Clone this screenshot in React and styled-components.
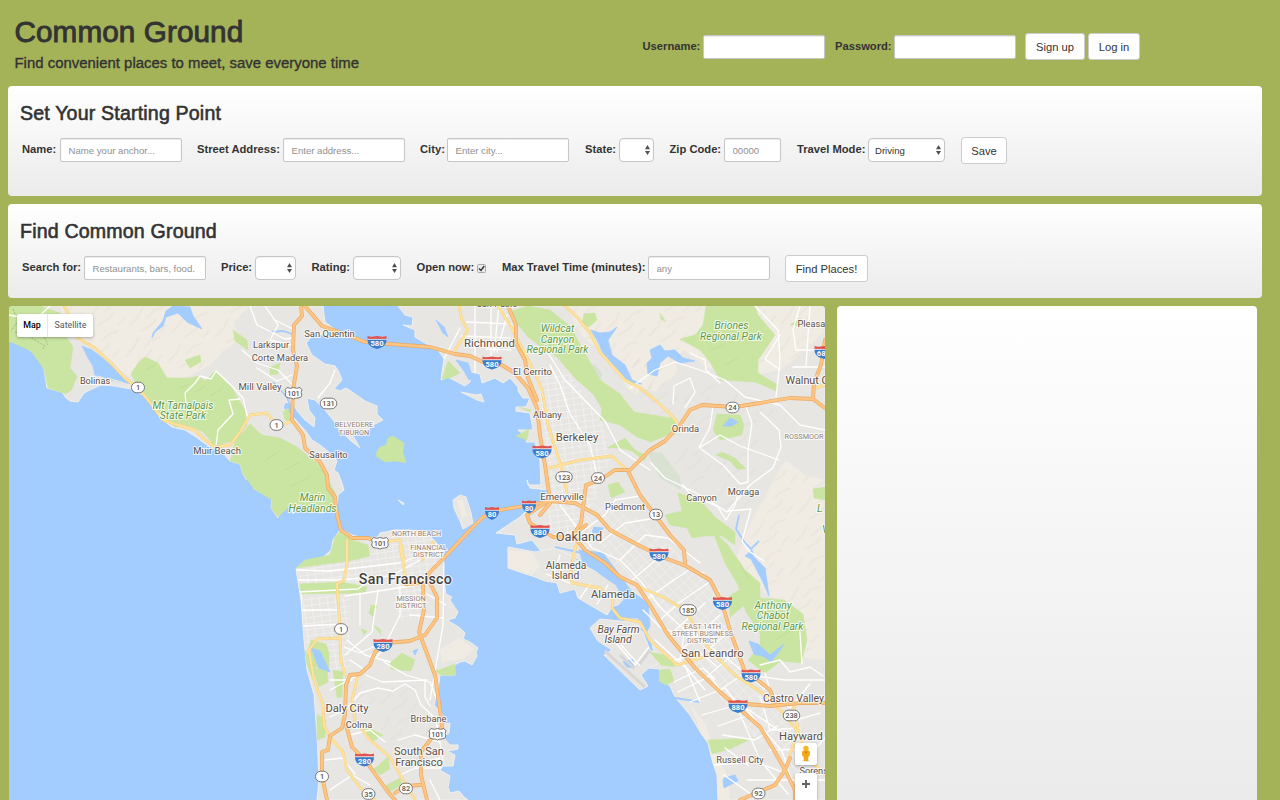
import React from 'react';
import styled, { createGlobalStyle } from 'styled-components';

const Global = createGlobalStyle`
  * { box-sizing: border-box; }
  body {
    margin: 0;
    background: #a4b258;
    color: #333;
    font-family: "Liberation Sans", Arial, sans-serif;
    font-size: 11.2px;
    overflow: hidden;
  }
`;

const Page = styled.div`
  width: 1280px;
  height: 800px;
  overflow: hidden;
  display: flex;
  flex-direction: column;
  padding-left: 8px;
`;

const Header = styled.header`
  height: 86px;
  display: flex;
  padding-left: 6.5px;
`;

const Brand = styled.div`
  width: 628px;
  padding-top: 13px;
`;

const Title = styled.h1`
  margin: 0;
  font-size: 29.7px;
  line-height: 38px;
  font-weight: 400;
  letter-spacing: 0.08px;
  -webkit-text-stroke: 0.9px #333;
`;

const Tagline = styled.p`
  margin: 3px 0 0;
  font-size: 14.9px;
  line-height: 18px;
  letter-spacing: 0.02px;
  -webkit-text-stroke: 0.35px #333;
`;

const Login = styled.form`
  display: flex;
  align-items: flex-start;
  padding-top: 33px;
`;

const Panel = styled.section`
  flex: none;
  width: 1254px;
  height: ${(p) => p.$height}px;
  margin-bottom: 8px;
  padding: 14px 0 0 12px;
  border-radius: 4px;
  background: linear-gradient(#fff, #ebebeb);
`;

const PanelTitle = styled.h2`
  margin: 0;
  font-size: 19.6px;
  line-height: 26px;
  font-weight: 400;
  letter-spacing: 0.17px;
  -webkit-text-stroke: 0.6px #333;
`;

const Row = styled.form`
  display: flex;
  align-items: flex-start;
  padding: 11px 0 0 2px;
`;

const Field = styled.label`
  display: flex;
  align-items: flex-start;
  padding-top: ${(p) => p.$top ?? 1}px;
  margin-right: ${(p) => p.$gap ?? 15}px;
`;

const Caption = styled.span`
  width: ${(p) => p.$w}px;
  line-height: 22px;
  font-weight: 700;
  white-space: nowrap;
`;

const Input = styled.input`
  width: ${(p) => p.$w || 122}px;
  height: 24px;
  margin: 0;
  padding: 1px 8px 0 7.5px;
  border: 1px solid #c6c6c6;
  border-radius: 2px;
  background: #fff;
  box-shadow: inset 0 1px 1px rgba(0, 0, 0, 0.08);
  font: 9.6px "Liberation Sans", Arial, sans-serif;
  color: #555;
  &::placeholder { color: #909090; opacity: 1; }
`;

const Select = styled.span`
  display: flex;
  align-items: center;
  justify-content: space-between;
  width: ${(p) => p.$w}px;
  height: 24px;
  padding: 0 3px 0 6px;
  border: 1px solid #c6c6c6;
  border-radius: 4px;
  background: #fff;
  box-shadow: inset 0 1px 1px rgba(0, 0, 0, 0.05);
  font-size: 9.6px;
  color: #333;
`;

const Arrows = styled.svg`
  width: 5px;
  height: 10px;
  margin-left: auto;
`;

const Check = styled.svg`
  width: 9px;
  height: 9px;
  margin-top: 8px;
`;

const Button = styled.button`
  width: ${(p) => p.$w}px;
  height: 27px;
  margin: 0 ${(p) => p.$gap || 0}px 0 0;
  padding: 1px 0 0;
  border: 1px solid #ccc;
  border-radius: 3px;
  background: #fff;
  color: #333;
  font: 11.2px "Liberation Sans", Arial, sans-serif;
  white-space: nowrap;
`;

const Body = styled.main`
  display: flex;
  gap: 12px;
  padding-left: 1px;
  height: 494px;
`;

const MapFrame = styled.section`
  position: relative;
  width: 816px;
  height: 494px;
  overflow: hidden;
  border-radius: 4px 4px 0 0;
  background: #a3ccff;
`;

const MapCanvas = styled.svg`
  display: block;
  width: 816px;
  height: 494px;
  font-family: Roboto, sans-serif;
`;

const Results = styled.aside`
  width: 420px;
  height: 494px;
  border-radius: 4px 4px 0 0;
  background: linear-gradient(#fff, #ebebeb 480px);
`;

const MapTypes = styled.div`
  position: absolute;
  left: 8px;
  top: 8px;
  display: flex;
  height: 23px;
  border-radius: 2px;
  background: #fff;
  box-shadow: 0 1px 3px rgba(0, 0, 0, 0.3);
`;

const MapType = styled.span`
  width: ${(p) => p.$w}px;
  line-height: 22px;
  text-align: center;
  font-family: Roboto, sans-serif;
  font-size: 8.9px;
  font-weight: ${(p) => (p.$active ? 500 : 400)};
  color: ${(p) => (p.$active ? '#000' : '#565656')};
  border-left: ${(p) => (p.$active ? 0 : 1)}px solid #e6e6e6;
`;

const MapTools = styled.div`
  position: absolute;
  left: 786px;
  top: 437px;
  display: flex;
  flex-direction: column;
  gap: 8px;
`;

const Tool = styled.div`
  width: 22px;
  height: ${(p) => p.$h}px;
  border-radius: 2px;
  background: #fff;
  box-shadow: 0 1px 3px rgba(0, 0, 0, 0.3);
  svg { display: block; }
`;

const LAND = [
  // Marin
  'M9 306V341L22 345L31 351L38 357L44 369L47 388L62 392L66 398L70 401L78 402L84 393L92 389L101 385L115 386L131 389L143 395L155 408L163 420L172 427L185 430L196 437L207 445L222 452L230 461L240 464L243 474L246 479L251 481L254 489L267 495L272 500L271 508L278 518L280 508L290 506L293 514L300 504L310 507L322 513L330 510L337 513L338 495L344 490L341 480L338 473L334 470L337 461L330 453L320 445L312 440L305 430L300 425L296 420L283 408L285 402L293 404L298 412L305 420L314 427L315 418L309 410L307 398L315 400L325 410L333 420L340 430L350 440L360 448L352 434L358 430L365 432L375 424L383 420L377 414V406L365 401L355 394L346 388L340 391L334 389L342 380L339 372L335 366L325 364L312 355L306 343L312 336L323 334L345 337L325 322L323 306Z',
  // San Francisco peninsula
  'M296 569L305 561L320 560L331 550L333 540L340 530L345 531L352 535L364 538L378 537L380 533L395 530L410 530L425 532L435 541L443 552L444 563L444 582L446 594L452 597L450 600L458 612L455 618L447 620L460 628L465 633L463 639L470 642L478 648L476 652L477 656L472 665L465 661L460 662L453 666L455 675L440 675L438 690L434 705L443 715L440 725L450 723L449 733L443 737L450 745L458 745V749L447 751L455 755L453 766L443 766L440 770L450 776L448 787L450 793L459 791L464 797L468 800H317L319 780L317 735L314 695L307 670L304 640L301 600Z',
  // East Bay shore
  'M398 306L405 315L413 317L412 326L403 325L415 330L415 337L430 346L438 350L444 359L441 380L448 377L465 386L470 382L471 372L480 374L482 383L495 378L503 383L510 378L518 387L518 391L523 398L530 398L526 407L516 407V411L530 413L533 430L518 430L528 438L526 442H535L540 460L541 485H528L527 480L530 488L548 490L546 501L530 507L520 517L496 533L515 535L517 544L532 540L540 550L562 551L570 555L580 560L595 562L610 573L622 584L630 592L640 604L624 608L620 618L630 622L645 630L652 644L655 657L645 660L640 667L660 669V679L670 686L675 697L690 715L702 735L708 743L712 760L717 775L718 800H825V306Z',
  // Alameda island and Bay Farm island
  'M508 547L535 552L556 548L570 556L589 568L608 578L626 594L625 602L612 607L607 615L590 605L578 598L575 589L560 593L557 583L545 581L535 577L508 568Z',
  'M590 628L600 619L630 622L643 632L650 650L668 660L650 667L641 675L648 686L640 690L604 655L612 650L598 641Z',
  // Treasure Island
  'M453 500L460 495L466 497L471 513L473 523L463 529L460 521L454 508Z',
  'M398 500L404 503L403 505Z',
  'M461 392L476 395L481 394L484 402L477 400Z',
];

const HILLS = [
  'M60 306H250L234 322L238 340L225 350L210 365L185 378H168L148 357L130 377L88 345L68 335Z',
  'M565 306H825V330L805 350L780 370L740 378L707 368L685 350L660 365L635 395L625 385L610 355L585 340Z',
  'M785 460L805 475L825 480V660L805 658L795 610L760 590L735 560L752 520L768 490Z',
  'M630 350L650 335L670 345L678 372L655 392L636 386Z',
  'M690 704L706 725L714 752L730 780L729 800H718L710 760L702 735Z',
  'M508 550L532 552L540 566L532 575L508 567Z',
  'M457 500L463 500L467 515L462 519Z',
  'M440 650L459 638L474 649L464 659L442 662Z',
];

const PARKS = [
  'M9 306H40L60 313L65 322V335L73 347L70 368L77 376L72 389L66 394L48 388L44 369L31 351L9 341Z',
  'M131 374L138 363L145 357L158 363L167 378L190 378L198 376L205 381L215 371L232 388L245 410L247 425L235 440L215 446L203 432L190 426L175 427L162 417L152 403L140 390Z',
  'M233 450L236 438L245 430L250 424L262 435L280 438L297 447L317 463L327 477L336 495L337 513L330 510L322 513L310 507L300 504L290 506L278 517L271 508L272 500L254 489L243 474L240 464L230 461Z',
  'M185 360L200 355L201 362L190 368Z',
  'M233 330L247 340L248 350L235 341Z',
  'M270 367L280 363L278 374L270 375Z',
  'M376 453L380 447L386 445L388 438L393 436L404 443L403 452L406 463L395 461L385 462L377 457Z',
  'M283 412L288 408L291 421L285 420Z',
  'M508 312L528 306L550 310L570 326L590 362L600 380L620 394L634 412L677 419L670 434L651 442L637 437L620 425L600 420L602 409L594 395L575 378L557 357L540 346L528 337Z',
  'M584 314L595 313L597 320L589 327L582 323Z',
  'M660 313L666 322L661 319Z',
  'M706 306H755L758 315L775 335L765 350L758 360V373L778 385L776 391L755 382L720 380L710 362L700 350L680 339L695 335L703 325Z',
  'M717 414L740 415L744 425L742 435L720 440L713 430Z',
  'M716 455L722 452L735 458L746 469L737 469L730 461Z',
  'M607 448L625 438L635 450L647 456L644 461L632 451L620 448Z',
  'M608 485L618 482L625 492L611 498Z',
  'M665 515L682 511L678 493L700 500L715 517L735 532L735 545L722 536H704L692 538L687 528L670 525Z',
  'M712 530L728 545L745 570L760 583V598L784 600L803 614L807 640L801 663L781 661L765 673L748 660L760 646V633L746 612L738 585L725 563Z',
  'M728 597L742 588L746 604L730 617Z',
  'M660 670L670 669L674 681L666 685L659 681Z',
  'M650 652L669 656L675 667L661 665Z',
  'M708 740L730 739L753 738L730 749L712 754Z',
  'M442 379L448 361L460 373L450 378Z',
  'M516 436L529 429L527 440Z',
  'M519 407L531 410L530 412Z',
  'M813 489L825 487V500L814 498Z',
  'M790 325L800 318L805 326Z',
  // San Francisco parks
  'M296 568L305 560L330 555L335 537L342 530L352 540L368 545L370 556L350 561L326 564Z',
  'M300 584L342 582L367 587L365 593L301 594Z',
  'M311 640L326 644L329 653V670L315 667L308 650Z',
  'M313 669L327 668L328 682L319 687Z',
  'M305 650L315 665L313 680L307 665Z',
  'M333 670L343 672L342 697L337 698Z',
  'M390 663L402 653L415 660L411 671L391 669Z',
  'M317 714L326 720L325 737L317 740Z',
  'M371 605L377 606L373 617L369 613Z',
  'M373 625L380 629L381 635Z',
  'M361 629L367 631L364 635Z',
  'M353 720L383 735L372 742L357 725Z',
  'M374 769L388 757L390 769L380 775Z',
  'M383 787L400 778L402 785L387 793Z',
  'M436 671L455 664L456 675H440Z',
];

const WATER = [
  'M82 346L92 350L100 356L112 366L125 377L133 384L113 381L101 376L95 375L93 366L88 358Z',
  'M166 311L173 306L190 307L193 316L202 329L187 322L178 313L166 317L163 326L155 332L152 338L153 333L163 321Z',
  'M591 330L600 333L610 332L617 327L608 340L612 355L625 365L632 380L642 384L630 383L615 367L603 353L598 342Z',
  'M650 350L660 345L665 351L675 350L683 358L695 361L680 363L668 356L660 363L657 376L648 374L647 363L652 358Z',
  'M723 426L730 418L738 422L732 426Z',
  'M752 550L745 556L751 559L762 580L769 596L765 568L754 557Z',
  'M749 641L758 644L770 655L784 644L778 653L771 662L765 657L754 654Z',
  'M311 648L320 651L330 672L319 668Z',
  'M623 662L633 659L634 668L627 667Z',
  'M579 550L603 553L616 570L632 592L648 603L650 626L646 633L638 618L622 618L613 611L624 600L616 585L600 574L582 560Z',
  'M594 527L603 528L599 534L592 532Z',
  'M444 327L448 337L443 333L436 320Z',
  'M456 360L468 363L473 378L469 380L464 371Z',
  'M724 778L735 775L738 781L724 788L723 781Z',
  'M413 651L418 649L415 655Z',
];

const STREETS = [
  // Marin
  'M186 403L185 393L195 383L200 376L211 379L216 371L232 386L243 398L248 419',
  'M216 446L218 430L233 414L229 400L240 399',
  'M250 306L257 325L285 339L292 338M242 350L257 363L278 370L293 385M265 306L278 325L270 340L292 345M292 375L277 381L257 368M318 398L330 383L335 370M295 330L275 320',
  'M9 315L35 320L50 306',
  // Richmond
  'M475 306V382M491 306V360M499 306L494 352M466 322L512 324M461 336L510 338M486 349L511 350M460 328L444 359M507 315L497 352',
  'M550 365L560 385L570 414L590 445L598 480M545 348L565 380L605 421L620 450L650 470',
  'M630 388L655 370L675 362L700 370L725 380L745 397L780 405L800 425L825 430',
  'M755 306L778 330L780 360L776 397M800 306L793 330L796 350H825M793 367H825M810 306L806 366M780 335L765 359L780 370',
  'M673 404L674 386L690 378L695 392L685 408M713 407L710 427L699 448L720 435L740 446L779 460M746 407L752 423L748 450V482L740 484L723 465L701 449',
  'M651 463L665 478L680 485L700 495L727 512L750 485L773 468L781 447L779 430L760 412',
  'M683 485L690 494L718 507L726 520L735 505L739 490',
  'M728 511L751 509L742 541L750 552L764 561',
  'M690 353L705 360L706 370L720 383',
  // San Francisco
  'M297 570L328 571L400 563L428 552M298 580H337L391 576L440 549M298 592L358 589L366 583M301 594L303 650M301 610H340M302 626L344 624M345 596L425 584M360 593V625M378 590L372 632L345 655M400 585V615L387 641L370 656M420 590L446 605M444 565L443 625L430 700M344 647L360 653L380 644M330 680H352M330 690L360 674L383 650M350 660L365 670M384 662L406 675L430 682L437 700M425 680V697L430 706M330 717L345 710L360 693L378 688L393 691L405 684L415 690L421 705L435 718L440 737',
  'M347 640L365 655L390 662M410 615L443 618M366 675L382 682L427 680M350 735L370 730L385 742M398 740L415 735L440 742L443 760M420 763L440 758M325 760L342 758L355 774M330 790L352 775L370 785M400 775L415 768H443M430 780L440 800',
  // Oakland and San Leandro
  'M560 505L575 525L592 548L620 560L632 572L642 583L660 607L690 635L720 653L765 689',
  'M570 540L605 515L615 500L640 496M600 543L625 523L650 519M620 560L645 535L668 538L700 563',
  'M630 582L670 548M645 600L690 569L704 573M660 620L680 602L708 583M670 635L705 603M681 650L720 615M695 661L731 630M705 678L735 653M720 690L745 673',
  'M643 610L661 628L684 635L680 660L705 690M655 640L686 668L700 702M675 660L701 653L717 667M674 682L703 668L715 679M678 692L710 676L720 690M690 702L725 688L737 703M702 715L740 704L780 731M718 726L750 715L765 731M723 735L755 740L777 726M734 700L760 760L788 794M742 674L785 680H825M765 673L770 690M760 696L770 730L800 728M775 695L790 708L810 684M745 708L782 751L795 790M713 765L756 762L790 775M724 775L748 792L760 800M725 748L749 766M792 721L820 713M810 755L825 738M770 750L810 749M747 780H825',
  'M760 665L780 660L790 672L810 667L823 676M800 632L802 664',
  'M608 585L597 604M590 584L580 598M546 574L575 585M552 580L560 555M615 642L635 665L649 647M621 645L640 666',
];

const YELLOW = [
  'M64 306L72 320L76 337L95 348L108 360L125 378L140 390L152 405L163 420L175 424L195 430L205 440L215 447L230 445L240 432L250 415L267 413L276 425M284 424L292 421',
  'M459 306L462 320L468 330L455 350M498 306L510 325L523 350L536 375L542 390L548 425L560 463L567 492M550 468L580 460L612 456L625 468',
  'M565 306L578 318L590 333L600 352L625 380L640 388L655 400L668 412L677 422',
  'M347 540V564L344 580L337 584L339 615L341 660L345 675M341 638L317 639L309 650L314 680L323 705L324 725L330 737L343 752L347 770L362 790L375 800M358 675L352 700L355 720L370 740L390 757L403 780L415 800M400 546L407 585M380 542L400 540L404 560M422 560L433 542',
  'M576 545L571 567L572 583L600 588L613 600L612 608L620 618L640 622L650 640L677 665L710 655',
  'M637 586L665 598L685 610L700 635L710 650L735 675L765 695L785 715L800 735L805 755L825 775M793 702L798 730L790 755',
  'M813 389L825 385',
];

const ORANGE = [
  'M301 306L302 316L294 325L293 350L297 366L293 390L292 420L303 435L305 448L320 462L327 475L328 488L335 497L337 515L341 530L352 538L368 538L378 542',
  'M305 306L322 326L345 334L365 342L390 344L430 347L455 354L470 356L483 362L500 364L515 373L528 388L537 408L540 435L545 465L550 500',
  'M508 306L516 325L516 343L525 360L528 378L537 400',
  'M423 583L430 572L444 558L470 530L483 517L500 510L530 505L550 501L575 503L597 515L610 530L640 546L665 558L686 566L710 580L722 603L730 630L737 650L745 672L760 682L770 690L775 702',
  'M405 584L423 583L424 610L419 632L435 675L440 710L442 727L430 740L421 752V775L427 800',
  'M430 583L437 597V618L425 635L410 641L385 643L375 652L370 665L360 674L350 675L346 685L345 715L342 728L330 736L328 750L322 752V776L327 800',
  'M346 725L352 747L365 760L378 778L388 792L395 800M395 793L406 786L421 785',
  'M572 537L581 523L586 485L600 480L615 470L630 470L650 450L665 441L680 425L690 410L702 405L735 407L760 403L790 398L813 399L825 408M825 340L821 365L814 383L813 398',
  'M628 471L640 495L655 515L670 535L684 550L685 563',
  'M548 501L527 515L530 523L553 537L575 538L585 550L605 563L620 577L637 585L650 605L668 635L695 668L720 692L735 705L760 727L775 752L785 770L795 790V800',
  'M735 703L770 706L800 703H825M740 800L775 785L785 770L790 758',
  'M550 503L540 515M586 525L573 536',
];

const TOWNS = [
  ['San Quentin', 329.5, 337, 9.4], ['Larkspur', 271, 348, 9.3], ['Corte Madera', 280, 361, 9.3],
  ['Mill Valley', 260, 390, 9.6], ['Bolinas', 95, 384, 9.2], ['Muir Beach', 217, 454, 9.5],
  ['Sausalito', 328.5, 458, 9.3], ['Richmond', 489.5, 346.5, 11.3], ['El Cerrito', 532.5, 374.5, 9.6],
  ['Albany', 547.5, 417.5, 9.5], ['Berkeley', 577, 440.5, 11.3], ['Orinda', 685.5, 432, 9.4],
  ['Canyon', 701.5, 500.5, 9.2], ['Moraga', 743.5, 494.5, 9.2], ['Piedmont', 625, 509.5, 9.3],
  ['Emeryville', 562, 499.5, 9.6], ['Oakland', 579, 540.5, 12.8], ['Alameda', 613, 597.5, 11.2],
  ['San Leandro', 712.5, 656.5, 11.2], ['Castro Valley', 793.5, 702, 10.5], ['Hayward', 801, 740, 11.2],
  ['Russell City', 740, 762.5, 9.2], ['Daly City', 347, 712, 11.2], ['Colma', 359, 727.5, 9.2],
  ['Brisbane', 428.5, 721.5, 9.2], ['South San', 419, 755, 11], ['Francisco', 419, 766, 11],
  ['Alameda', 566, 569, 10.3], ['Island', 565.5, 579, 10.3],
];

const DISTRICTS = [
  ['BELVEDERE', 354, 427], ['TIBURON', 354, 434.5], ['NORTH BEACH', 416.5, 535.5],
  ['FINANCIAL', 428.5, 549.5], ['DISTRICT', 428.5, 557], ['MISSION', 411, 600.5], ['DISTRICT', 411, 608],
  ['EAST 14TH', 702.5, 628.5], ['STREET BUSINESS', 702.5, 636], ['DISTRICT', 702.5, 643],
  ['ROSSMOOR', 804, 438.5],
];

const PARK_NAMES = [
  ['Mt Tamalpais', 183, 408.5], ['State Park', 183, 419], ['Marin', 312.5, 501], ['Headlands', 312.5, 511.5],
  ['Wildcat', 557.5, 332], ['Canyon', 557.5, 342.5], ['Regional Park', 557.5, 353],
  ['Briones', 731.5, 329], ['Regional Park', 731, 339.5],
  ['Anthony', 773, 608.5], ['Chabot', 773, 619], ['Regional Park', 772.5, 629.5],
];

const INTERSTATES = [
  [377, 342.5, '580'], [492, 363, '580'], [542, 452, '580'], [492, 513.5, '80'], [529, 507, '80'],
  [540, 531.5, '880'], [659, 555, '580'], [722.5, 603.5, '580'], [751, 676, '580'], [738, 706.5, '880'],
  [383, 645.5, '280'], [364.5, 760, '280'], [824, 352.5, '680'],
];

const ROUTES = [
  [138, 387.5, '1'], [276.5, 425, '1'], [293.5, 393, '101'], [328.5, 403.5, '131'], [380, 543, '101'],
  [341, 629, '1'], [322, 776.5, '1'], [368.5, 794, '35'], [406, 788.5, '82'], [437.5, 734, '101'],
  [564, 477, '123'], [598, 478, '24'], [732.5, 407.5, '24'], [656, 514.5, '13'], [688, 610, '185'],
  [791.5, 715.5, '238'], [758.5, 793.5, '92'],
];

function Interstate({ x, y, n }) {
  const w = n.length > 2 ? 19 : 14;
  const h = w / 2;
  const edge = x > 820;
  return (
    <g transform={`translate(${x} ${y})`}>
      <path d={`M${-h} -6.5Q${-h + 3} -5 0 -6.5Q${h - 3} -5 ${h} -6.5L${h} -3.5H${-h}Z`} fill="#e0524d" />
      <path d={`M${-h} -3H${h}C${h} 2 ${h - 3} 5 0 6.5C${-h + 3} 5 ${-h} 2 ${-h} -3Z`} fill="#3b7ccb" />
      <path d={`M${-h} -3.2H${h}`} stroke="#fff" strokeWidth=".6" />
      <text x={edge ? -7.2 : 0} y="3.6" fontSize="7.6" fontWeight="700" fill="#fff" textAnchor={edge ? 'start' : 'middle'}>
        {edge ? n.slice(0, 2) : n}
      </text>
    </g>
  );
}

function Route({ x, y, n }) {
  const three = n.length === 3;
  const w = three ? 16.5 : 13;
  return (
    <g transform={`translate(${x} ${y})`}>
      {n === '101' ? (
        <path
          d="M-6.5 -5.5Q-3 -3.8 0 -5.5Q3 -3.8 6.5 -5.5L8.4 -3.2Q7 -0.5 8.3 2Q8 5 4.5 5Q2 4.8 0 6Q-2 4.8 -4.5 5Q-8 5 -8.3 2Q-7 -0.5 -8.4 -3.2Z"
          fill="#fff" stroke="#777" strokeWidth="1"
        />
      ) : (
        <rect x={-w / 2} y="-5.3" width={w} height="10.6" rx="5.3" fill="#fff" stroke="#777" strokeWidth="1" />
      )}
      <text y="2.7" fontSize="7.4" fontWeight="500" fill="#555" textAnchor="middle">{n}</text>
    </g>
  );
}

const Roads = ({ paths, color, width }) => (
  <g fill="none" stroke={color} strokeWidth={width} strokeLinejoin="round" strokeLinecap="round">
    {paths.map((d) => <path key={d} d={d} />)}
  </g>
);

const Shapes = ({ paths, ...rest }) => (
  <g {...rest}>{paths.map((d) => <path key={d} d={d} />)}</g>
);

function BayMap() {
  return (
    <MapCanvas viewBox="9 306 816 494">
      <defs>
        <pattern id="blocks" width="8" height="6" patternUnits="userSpaceOnUse" patternTransform="rotate(-8)">
          <path d="M0 0H8M0 0V6" stroke="#fff" strokeWidth=".9" fill="none" />
        </pattern>
        <pattern id="blocksDiag" width="10" height="7" patternUnits="userSpaceOnUse" patternTransform="rotate(48)">
          <path d="M0 0H10M0 0V7" stroke="#fff" strokeWidth=".8" fill="none" />
        </pattern>
        <pattern id="ridges" width="43" height="31" patternUnits="userSpaceOnUse" patternTransform="rotate(8)">
          <path d="M2 25L9 15L12 6M19 14L25 6L33 2M14 29L24 21L27 15M33 27L38 19" stroke="#d9d5cb" strokeWidth="2" strokeLinecap="round" fill="none" opacity=".28" />
        </pattern>
        <clipPath id="ground">{LAND.map((d) => <path key={d} d={d} />)}</clipPath>
      </defs>
      <rect x="9" y="306" width="816" height="494" fill="#a3ccff" />
      <Shapes paths={LAND} fill="#e8e6e3" stroke="#f1efea" strokeWidth="1" />
      <g clipPath="url(#ground)">
        <Shapes paths={HILLS} fill="#f0ece3" />
        <Shapes paths={HILLS.slice(0, 4)} fill="url(#ridges)" />
        <path d="M345 685L430 680L438 740L390 740Z" fill="url(#ridges)" />
        <path d="M630 385L720 380L775 405L750 520L700 495L665 450Z" fill="url(#ridges)" />
        <path d="M298 565L378 548L430 535L442 552L427 585L301 585ZM302 596H350V670H309ZM392 585H422V620H398Z" fill="url(#blocks)" opacity=".75" />
        <path d="M537 375L570 375L604 425L610 460L582 535L549 530L546 450Z" fill="url(#blocks)" opacity=".75" />
        <path d="M585 500L640 520L720 590L755 690L800 710L805 780L735 720L650 600L570 540Z" fill="url(#blocksDiag)" opacity=".65" />
        <path d="M570 370L595 364L602 374L600 385L580 383ZM646 450L662 453L680 477L681 490L660 478Z" fill="#d5e0ce" opacity=".8" />
      </g>
      <Shapes paths={PARKS} fill="#c9e5a1" stroke="#c9e5a1" strokeWidth=".5" strokeLinejoin="round" />
      <path d="M145 370L155 366M195 392L205 386M210 396L222 389M180 388L190 384M285 470L300 462M265 460L277 453M290 487L310 477M740 565L750 580M710 350L724 345M725 365L738 358M775 640L790 631" stroke="#b8d98f" fill="none" opacity=".6" />
      <path d="M15 332L30 337L45 346L42 350M13 309L18 321L11 331M35 320L47 324L42 332L48 345" stroke="#8fa56c" strokeDasharray="2 1.5" fill="none" strokeWidth=".7" />
      <Shapes paths={WATER} fill="#a3ccff" stroke="#a3ccff" strokeWidth=".8" strokeLinejoin="round" />
      <path d="M739 515L736 529L745 543L751 549L759 541M270 332L283 331L292 334M273 382L287 397L291 408M657 695L700 702M555 547L582 553L609 563" fill="none" stroke="#a3ccff" strokeWidth="1.8" />
      <path d="M100 382L118 381L132 386M107 378L122 382" stroke="#e9eadd" strokeWidth="1.2" fill="none" />
      <path d="M620 655L634 668M605 651L645 687M650 650L638 666" stroke="#d8d7d5" strokeWidth="3" fill="none" />
      <g clipPath="url(#ground)"><Roads paths={STREETS} color="#fff" width="1.3" /></g>
      <Roads paths={YELLOW} color="#f1d083" width="2.9" />
      <Roads paths={YELLOW} color="#ffe29b" width="2" />
      <Roads paths={ORANGE} color="#eba761" width="3.8" />
      <Roads paths={ORANGE} color="#fdc583" width="2.6" />
      {INTERSTATES.map(([x, y, n]) => <Interstate key={`${x}-${y}`} x={x} y={y} n={n} />)}
      {ROUTES.map(([x, y, n]) => <Route key={`${x}-${y}`} x={x} y={y} n={n} />)}
      <g textAnchor="middle" stroke="#fff" strokeWidth="2" strokeOpacity=".8" strokeLinejoin="round" style={{ paintOrder: 'stroke' }}>
        <g fill="#5b5048">
          {TOWNS.map(([t, x, y, s]) => <text key={`${t}${y}`} x={x} y={y} fontSize={s}>{t}</text>)}
          <text x="405.5" y="584" fontSize="14.2" fontWeight="500" letterSpacing=".3" fill="#46403a">San Francisco</text>
          <text x="618.5" y="633" fontSize="10.4" fontStyle="italic">Bay Farm</text>
          <text x="618" y="643" fontSize="10.4" fontStyle="italic">Island</text>
          <text x="797.5" y="327" fontSize="9.2" textAnchor="start">Pleasa</text>
          <text x="785.5" y="383.5" fontSize="10.8" textAnchor="start">Walnut C</text>
          <text x="799.5" y="773.5" fontSize="9.2" textAnchor="start">Sorens</text>
          <text x="497" y="306.5" fontSize="9.2">San Pablo</text>
        </g>
        <g fill="#97806f" fontSize="7.3">
          {DISTRICTS.map(([t, x, y]) => <text key={`${t}${y}`} x={x} y={y}>{t}</text>)}
        </g>
        <g fill="#5c9a45" fontSize="10.4" fontStyle="italic">
          {PARK_NAMES.map(([t, x, y]) => <text key={`${t}${x}${y}`} x={x} y={y}>{t}</text>)}
          <text x="817" y="512" textAnchor="start">L</text>
          <text x="822" y="533" textAnchor="start">V</text>
        </g>
      </g>
    </MapCanvas>
  );
}

const Dropdown = ({ w, children }) => (
  <Select $w={w}>
    {children}
    <Arrows viewBox="0 0 5 10"><path d="M0 4.2L2.5 0L5 4.2ZM0 6H5L2.5 10Z" fill="#505050" /></Arrows>
  </Select>
);

export default function App() {
  return (
    <>
      <Global />
      <Page>
        <Header>
          <Brand>
            <Title>Common Ground</Title>
            <Tagline>Find convenient places to meet, save everyone time</Tagline>
          </Brand>
          <Login>
            <Field $gap={10} $top={2}><Caption $w={60.5}>Username:</Caption><Input /></Field>
            <Field $gap={9} $top={2}><Caption $w={59}>Password:</Caption><Input type="password" /></Field>
            <Button type="button" $w={60} $gap={3}>Sign up</Button>
            <Button type="button" $w={52}>Log in</Button>
          </Login>
        </Header>

        <Panel $height={110}>
          <PanelTitle>Set Your Starting Point</PanelTitle>
          <Row>
            <Field><Caption $w={38}>Name:</Caption><Input placeholder="Name your anchor..." /></Field>
            <Field><Caption $w={86}>Street Address:</Caption><Input placeholder="Enter address..." /></Field>
            <Field $gap={16}><Caption $w={27}>City:</Caption><Input placeholder="Enter city..." /></Field>
            <Field $gap={15.5}><Caption $w={34}>State:</Caption><Dropdown w={35} /></Field>
            <Field $gap={16}><Caption $w={54.5}>Zip Code:</Caption><Input $w={57} placeholder="00000" /></Field>
            <Field $gap={16}><Caption $w={71}>Travel Mode:</Caption><Dropdown w={77}>Driving</Dropdown></Field>
            <Button type="button" $w={46}>Save</Button>
          </Row>
        </Panel>

        <Panel $height={94}>
          <PanelTitle>Find Common Ground</PanelTitle>
          <Row>
            <Field $gap={15}><Caption $w={62}>Search for:</Caption><Input placeholder="Restaurants, bars, food." /></Field>
            <Field $gap={15.5}><Caption $w={34}>Price:</Caption><Dropdown w={41} /></Field>
            <Field $gap={15.5}><Caption $w={41.5}>Rating:</Caption><Dropdown w={48} /></Field>
            <Field $gap={16}>
              <Caption $w={60.5}>Open now:</Caption>
              <Check viewBox="0 0 9 9">
                <rect x=".5" y=".5" width="8" height="8" rx="1" fill="#e8e8e8" stroke="#aaa" />
                <path d="M2 4.5L4 6.5L7.2 2" fill="none" stroke="#333" strokeWidth="1.4" />
              </Check>
            </Field>
            <Field><Caption $w={146}>Max Travel Time (minutes):</Caption><Input placeholder="any" /></Field>
            <Button type="button" $w={83}>Find Places!</Button>
          </Row>
        </Panel>

        <Body>
          <MapFrame>
            <BayMap />
            <MapTypes>
              <MapType $active $w={30}>Map</MapType>
              <MapType $w={46}>Satellite</MapType>
            </MapTypes>
            <MapTools>
              <Tool $h={22}>
                <svg viewBox="0 0 22 22" width="22" height="22">
                  <ellipse cx="11" cy="17.6" rx="4" ry="1.2" fill="#ddd" />
                  <path d="M7 9Q7 7.5 9 7.5H13Q15 7.5 15 9L14.6 13L13.5 13.5L13 18H9L8.5 13.5L7.3 13Z" fill="#f0a818" />
                  <path d="M9.2 8.4L11 10.5L12.8 8.4Z" fill="#c87f12" />
                  <circle cx="11" cy="5.5" r="2.7" fill="#f5b52a" />
                </svg>
              </Tool>
              <Tool $h={44}>
                <svg viewBox="0 0 22 22" width="22" height="22">
                  <path d="M7 11H15M11 7V15" stroke="#666" strokeWidth="2" />
                </svg>
              </Tool>
            </MapTools>
          </MapFrame>
          <Results />
        </Body>
      </Page>
    </>
  );
}
